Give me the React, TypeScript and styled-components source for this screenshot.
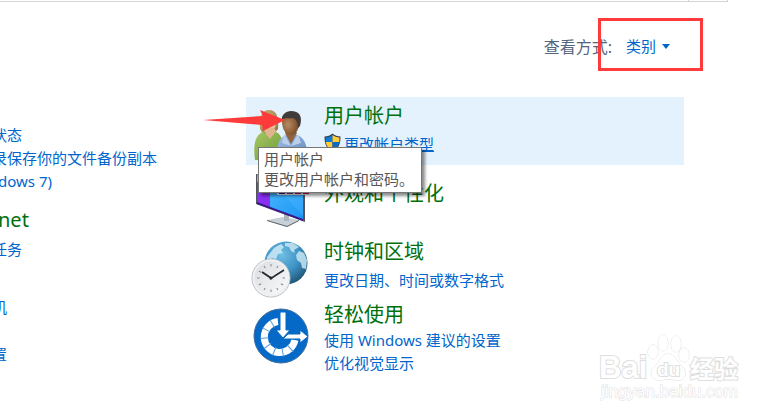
import React from "react";
import styled, { createGlobalStyle } from "styled-components";

const GlobalStyle = createGlobalStyle`
  * { box-sizing: border-box; }
  body {
    margin: 0;
    background: #fff;
    font-family: "Noto Sans", "Noto Sans CJK SC", sans-serif;
    font-size: 15px;
    overflow-x: hidden;
  }
`;

const Page = styled.div`
  position: relative;
  min-height: 100vh;
  overflow: hidden;
`;

const AddressBar = styled.div`
  display: flex;
  justify-content: flex-end;
  height: 2px;
  margin-right: 53px;
  border-bottom: 1px solid #d4d4d4;
  border-right: 1px solid #d4d4d4;
`;

const RefreshCell = styled.div`
  width: 39px;
  border-left: 1px solid #d4d4d4;
`;

const Header = styled.header`
  display: flex;
  justify-content: flex-end;
  height: 95px;
  padding: 32px 111px 0 0;
`;

const ViewPicker = styled.div`
  position: relative;
  display: flex;
  align-items: center;
  gap: 14px;
  height: 24px;
`;

const ViewLabel = styled.label`
  color: #56657d;
  font-size: 16px;
`;

const SelectWrap = styled.div`
  display: flex;
  align-items: center;
  gap: 5px;
`;

const ViewSelect = styled.select`
  appearance: none;
  margin: 0;
  padding: 0;
  border: 0;
  background: transparent;
  color: #0066cc;
  font: inherit;
`;

const Highlight = styled.div`
  position: absolute;
  top: -16px;
  right: -33px;
  width: 105px;
  height: 53px;
  border: 3px solid #ff3a3a;
  pointer-events: none;
`;

const Columns = styled.main`
  display: grid;
  grid-template-columns: minmax(0, 246fr) minmax(0, 438fr);
  margin-right: 97px;
`;

const LeftColumn = styled.div`
  display: flex;
  flex-direction: column;
  margin-left: -8px;
  padding-top: 27px;
`;

const Section = styled.section<{ $gap: number }>`
  display: flex;
  flex-direction: column;
  align-items: flex-start;
  margin-bottom: ${(p) => p.$gap}px;
  & > h2 { margin-bottom: 4px; }
`;

const Latin = styled.span`
  padding-left: 6px;
`;

const Title = styled.h2`
  margin: 0;
  font-size: 20px;
  font-weight: 400;
  line-height: 28px;
  white-space: nowrap;
`;

const TitleLink = styled.a`
  color: #00700d;
  text-decoration: none;
`;

const TaskLink = styled.a<{ $hover?: boolean }>`
  color: #0066cc;
  line-height: 23px;
  white-space: nowrap;
  text-decoration: ${(p) => (p.$hover ? "underline" : "none")};
`;

const Tile = styled.section<{ $active?: boolean }>`
  position: relative;
  display: flex;
  gap: 14px;
  min-height: 68px;
  padding-left: 4px;
  background: ${(p) => (p.$active ? "#e4f2fd" : "transparent")};
`;

const TileIcon = styled.svg`
  flex: none;
  width: 60px;
  height: 58px;
  margin-top: 5px;
  overflow: visible;
`;

const TileBody = styled.div<{ $top: number; $gap: number }>`
  display: flex;
  flex-direction: column;
  align-items: flex-start;
  padding-top: ${(p) => p.$top}px;
  & > h2 { margin-bottom: ${(p) => p.$gap}px; }
`;

const TaskRow = styled.div`
  display: flex;
  gap: 3px;
`;

const Shield = styled.svg`
  width: 17px;
  height: 19px;
`;

const Tooltip = styled.div`
  position: absolute;
  z-index: 2;
  top: 50px;
  left: 12px;
  padding: 1px 7px 3px 5px;
  border: 1px solid #767676;
  background: #fff;
  box-shadow: 3px 3px 3px rgba(0, 0, 0, 0.45);
  color: #575757;
  line-height: 20px;
  white-space: nowrap;
`;

const Pointer = styled.svg`
  position: absolute;
  z-index: 3;
  top: 12px;
  left: -43px;
  width: 83px;
  height: 23px;
`;

const Watermark = styled.svg`
  position: absolute;
  right: 37px;
  bottom: 13px;
  width: 148px;
  height: 76px;
`;

function UsersIcon() {
  return (
    <TileIcon viewBox="0 0 60 58" aria-hidden="true">
      <defs>
        <linearGradient id="hair" x1="0" y1="0" x2="1" y2="1">
          <stop offset="0" stopColor="#c9b072" />
          <stop offset="1" stopColor="#8d7842" />
        </linearGradient>
        <linearGradient id="green" x1="0" y1="0" x2="1" y2="1">
          <stop offset="0" stopColor="#a5c760" />
          <stop offset="1" stopColor="#6f9a3c" />
        </linearGradient>
        <linearGradient id="blue" x1="0" y1="0" x2="1" y2="1">
          <stop offset="0" stopColor="#9fbde3" />
          <stop offset="1" stopColor="#6388be" />
        </linearGradient>
        <radialGradient id="face" cx="0.35" cy="0.5" r="0.65">
          <stop offset="0" stopColor="#b68a62" />
          <stop offset="1" stopColor="#754720" />
        </radialGradient>
      </defs>
      <path d="M10 27C9 16 11 8 19 8c8 0 10 8 9 19l-4 5H13Z" fill="url(#hair)" />
      <path d="M13 17q6 0 10-4l3 7q0 8-6 9-6-1-7-12Z" fill="#e5c3a0" />
      <path d="M5 58c-2-15 0-25 8-28l7 5 6-5c7 3 8 13 7 28Z" fill="url(#green)" />
      <path d="m14 29 6 8 6-8-2-3h-8Z" fill="#e0b58d" />
      <path d="M27 58c-1-15 2-22 9-25h11c8 3 11 11 10 25Z" fill="url(#blue)" />
      <path d="m35 31 6 11 6-11-3-4h-6Z" fill="#8e633d" />
      <path d="m34 32 7 12-9-3ZM48 32l-7 12 10-3Z" fill="#b9cfeb" />
      <path d="M32 20c0-6 4-8 9-8 7 0 9 4 8 11-1 6-4 10-8 10-6 0-9-7-9-13Z" fill="url(#face)" />
      <path d="M32 18c-1-5 4-9 9-9 8 0 12 5 9 15l-2 2c0-6-2-9-5-10-4 1-8-1-11 2Z" fill="#413c3a" />
    </TileIcon>
  );
}

function MonitorIcon() {
  return (
    <TileIcon viewBox="0 0 60 58" aria-hidden="true">
      <defs>
        <linearGradient id="screen" x1="0" y1="0" x2="1" y2="1">
          <stop offset="0" stopColor="#55c4ff" />
          <stop offset="1" stopColor="#1b93f5" />
        </linearGradient>
      </defs>
      <path d="m17 50 16-3 16 3-12 7Z" fill="#c7d0d7" />
      <path d="m17 50 20 6 12-6v1l-12 6-20-6Z" fill="#555c63" />
      <path d="M34 42h5v9h-5Z" fill="#aab5bd" />
      <path d="m6 4 49 9v39L6 34Z" fill="#50545c" />
      <path d="m7 5 46 9v36L7 33Z" fill="url(#screen)" />
      <path d="M7 12l13 4v22L7 33Z" fill="#882ff2" />
      <path d="m7 32 46 17v2L7 34Z" fill="#3b168d" />
      <path d="M34 25h19v21Z" fill="#54bbff" opacity=".35" />
      <path d="M27 19h33v6H27Z" fill="#eceef2" />
      <path d="M29 21h6v3h-6Z" fill="#4b0a96" />
      <path d="M37 21h6v3h-6Z" fill="#704090" />
      <path d="M45 21h6v3h-6Z" fill="#b00a6d" />
      <path d="M53 21h6v3h-6Z" fill="#cc0060" />
    </TileIcon>
  );
}

function ClockIcon() {
  const ticks = Array.from({ length: 12 }, (_, i) => i * 30);
  return (
    <TileIcon viewBox="0 0 60 58" aria-hidden="true">
      <defs>
        <radialGradient id="globe" cx="0.4" cy="0.3" r="0.75">
          <stop offset="0" stopColor="#70bfe4" />
          <stop offset="0.55" stopColor="#3d93c4" />
          <stop offset="1" stopColor="#1f5172" />
        </radialGradient>
        <linearGradient id="dial" x1="0" y1="0" x2="1" y2="1">
          <stop offset="0" stopColor="#d8dade" />
          <stop offset="1" stopColor="#fcfcfc" />
        </linearGradient>
      </defs>
      <circle cx="36" cy="25" r="21.5" fill="url(#globe)" />
      <path d="m17 19 7-9 7-4 3 3-3 3 2 3-5 1-2 5-4-1-2 5-3-2Z" fill="#cde9f5" opacity=".85" />
      <path d="m35 5 8 0 6 4-5 3 1 3-4-2-2-4-4-1ZM49 13l5 2 3 7-1 9-4-1-1-5-4-3-1-5Z" fill="#c8e6f2" opacity=".85" />
      <circle cx="21" cy="40" r="19" fill="url(#dial)" stroke="#b6bcc4" strokeWidth="1" />
      <circle cx="21" cy="40" r="17.5" fill="none" stroke="#eef0f3" strokeWidth="2" />
      {ticks.map((a) => (
        <path key={a} d="M21 26v2.5" stroke="#80868d" transform={`rotate(${a} 21 40)`} />
      ))}
      <path d="m12 34 9 6" stroke="#252a31" strokeWidth="2" />
      <path d="m20 41 14-9" stroke="#252a31" strokeWidth="1.5" />
      <circle cx="21" cy="40" r="1.5" fill="#252a31" />
    </TileIcon>
  );
}

function EaseIcon() {
  const seams = [-30, -62, -94, -126, -158, -190, -222];
  return (
    <TileIcon viewBox="0 0 60 58" aria-hidden="true">
      <circle cx="31" cy="30" r="27" fill="#0569c7" stroke="#3f6f9f" />
      <path d="M28 15.600A15.500 15.500 0 1 0 45 34" fill="none" stroke="#fff" strokeWidth="7" />
      {seams.map((a) => (
        <path key={a} d="M30 11v9" stroke="#5a9ad8" transform={`rotate(${a} 30 31)`} />
      ))}
      <path d="M30 6h6v18h4l-7 8-7-8h4Z" fill="#fff" stroke="#0569c7" strokeWidth="1" />
      <path d="m33 33 5-5h12v-4l8 6.500-8 6.500v-4H33Z" fill="#fff" stroke="#0569c7" strokeWidth="1" />
    </TileIcon>
  );
}

function ShieldIcon() {
  return (
    <Shield viewBox="0 0 17 19" aria-hidden="true">
      <path d="M8.5.5c2 2 5 3 8 3 0 8-2 12-8 15-6-3-8-7-8-15 3 0 6-1 8-3Z" fill="#333d4a" />
      <path d="M8.5 2v7H1.7l-.2-4.6C4 4.3 6.5 3.5 8.5 2Z" fill="#0d7bd8" />
      <path d="M8.5 2c2 1.5 4.500 2.300 7 2.400L15.300 9H8.500Z" fill="#ffcd3b" />
      <path d="M1.700 9h6.800v8.300C4.500 15.300 2.300 13 1.700 9Z" fill="#ffcd3b" />
      <path d="M15.300 9H8.500v8.300c4-2 6.200-4.300 6.800-8.300Z" fill="#0d6bc4" />
    </Shield>
  );
}

export default function App() {
  return (
    <>
      <GlobalStyle />
      <Page>
        <AddressBar>
          <RefreshCell />
        </AddressBar>
        <Header>
          <ViewPicker>
            <ViewLabel htmlFor="view">查看方式:</ViewLabel>
            <SelectWrap>
              <ViewSelect id="view">
                <option>类别</option>
              </ViewSelect>
              <svg width="8" height="5" viewBox="0 0 8 5" aria-hidden="true">
                <path d="M0 0h8L4 5Z" fill="#0066cc" />
              </svg>
            </SelectWrap>
            <Highlight />
          </ViewPicker>
        </Header>
        <Columns>
          <LeftColumn>
            <Section $gap={13}>
              <TaskLink href="#status">状态</TaskLink>
              <TaskLink href="#history">录保存你的文件备份副本</TaskLink>
              <TaskLink href="#backup"><Latin>dows 7)</Latin></TaskLink>
            </Section>
            <Section $gap={35}>
              <Title><TitleLink href="#network"><Latin>net</Latin></TitleLink></Title>
              <TaskLink href="#tasks">任务</TaskLink>
            </Section>
            <Section $gap={24}>
              <TaskLink href="#devices">机</TaskLink>
            </Section>
            <Section $gap={0}>
              <TaskLink href="#mobility">置</TaskLink>
            </Section>
          </LeftColumn>
          <div>
            <Tile $active>
              <UsersIcon />
              <TileBody $top={5} $gap={3}>
                <Title><TitleLink href="#accounts">用户帐户</TitleLink></Title>
                <TaskRow>
                  <ShieldIcon />
                  <TaskLink href="#account-type" $hover>更改帐户类型</TaskLink>
                </TaskRow>
              </TileBody>
              <Pointer viewBox="0 0 83 23" aria-hidden="true">
                <path d="M0 11 60 7 57 1l25 10-22 11-1-6Z" fill="#ff3a3a" />
              </Pointer>
              <Tooltip role="tooltip">
                <div>用户帐户</div>
                <div>更改用户帐户和密码。</div>
              </Tooltip>
            </Tile>
            <Tile>
              <MonitorIcon />
              <TileBody $top={15} $gap={0}>
                <Title><TitleLink href="#appearance">外观和个性化</TitleLink></Title>
              </TileBody>
            </Tile>
            <Tile>
              <ClockIcon />
              <TileBody $top={5} $gap={3}>
                <Title><TitleLink href="#clock">时钟和区域</TitleLink></Title>
                <TaskLink href="#formats">更改日期、时间或数字格式</TaskLink>
              </TileBody>
            </Tile>
            <Tile>
              <EaseIcon />
              <TileBody $top={0} $gap={0}>
                <Title><TitleLink href="#ease">轻松使用</TitleLink></Title>
                <TaskLink href="#suggest">使用 Windows 建议的设置</TaskLink>
                <TaskLink href="#visual">优化视觉显示</TaskLink>
              </TileBody>
            </Tile>
          </div>
        </Columns>
        <Watermark viewBox="0 0 148 76" role="img" aria-label="Baidu">
          <g
            fill="#fff"
            stroke="#dedede"
            strokeWidth="2"
            paintOrder="stroke"
            fontFamily='"Liberation Sans", "Noto Sans CJK SC", sans-serif'
            fontWeight="700"
          >
            <text x="3" y="48" fontSize="31">Bai</text>
            <ellipse cx="57" cy="22" rx="5" ry="7" strokeWidth="1" />
            <ellipse cx="67" cy="13" rx="5" ry="8" strokeWidth="1" />
            <ellipse cx="80" cy="14" rx="5" ry="8" strokeWidth="1" />
            <ellipse cx="88" cy="25" rx="5" ry="7" strokeWidth="1" />
            <path d="M72 24c7 0 9 8 14 12 7 7 2 16-6 14-6-1-10-1-15 0-9 1-13-7-6-14 5-4 6-12 13-12Z" strokeWidth="1" />
            <text x="61" y="46" fontSize="19">du</text>
            <text x="94" y="48" fontSize="24">经验</text>
            <text x="5" y="67" fontSize="17" fontWeight="400" strokeWidth="1" fontFamily='"Liberation Sans", sans-serif'>
              jingyan.baidu.com
            </text>
          </g>
        </Watermark>
      </Page>
    </>
  );
}
